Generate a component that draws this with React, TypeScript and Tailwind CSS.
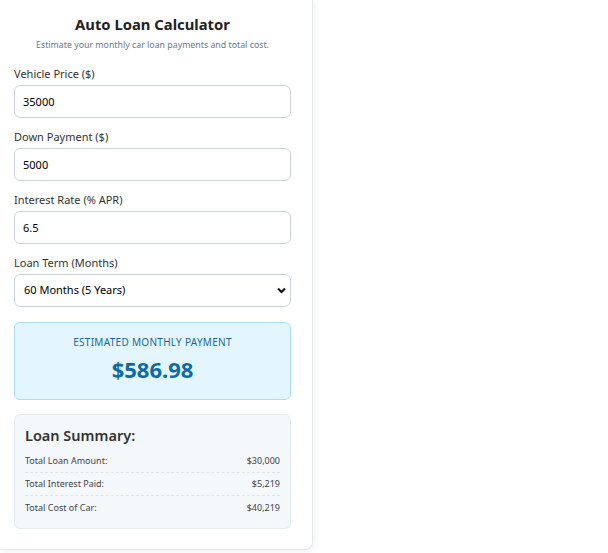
import { useState } from "react";

const fieldCls =
  "w-full h-[33px] px-[8px] border border-[#c9d3df] rounded-[6px] bg-white text-[11px] text-black focus:outline-none";

const App = () => {
  const [price, setPrice] = useState("35000");
  const [down, setDown] = useState("5000");
  const [rate, setRate] = useState("6.5");
  const [term, setTerm] = useState("60");

  const principal = Number(price) - Number(down);
  const r = Number(rate) / 100 / 12;
  const n = Number(term);
  const monthly = r === 0 ? principal / n : (principal * r) / (1 - Math.pow(1 + r, -n));
  const totalPaid = monthly * n;
  const interest = totalPaid - principal;
  const totalCost = totalPaid + Number(down);

  const fmt = (v: number) => "$" + Math.round(v).toLocaleString("en-US");

  return (
    <div className="min-h-[553px] bg-white font-['Noto_Sans',sans-serif]">
      <div className="w-[313px] pl-[14px] pr-[21px] pt-[13px] pb-[20px] bg-white border-r border-b border-[#e3e8ee] rounded-br-[8px] shadow-[2px_2px_6px_rgba(0,0,0,0.06)]">
        <h1 className="text-center text-[14.8px] font-bold text-[#222] leading-[22px]">Auto Loan Calculator</h1>
        <p className="text-center text-[8.8px] text-[#6b7a8c] mt-[3px] leading-[14px]">
          Estimate your monthly car loan payments and total cost.
        </p>

        <div className="mt-[14px] flex flex-col gap-[11px]">
          <div>
            <label className="block text-[11px] text-[#333] leading-[15px] mb-[4px]">Vehicle Price ($)</label>
            <input className={fieldCls} value={price} onChange={(e) => setPrice(e.target.value)} />
          </div>
          <div>
            <label className="block text-[11px] text-[#333] leading-[15px] mb-[4px]">Down Payment ($)</label>
            <input className={fieldCls} value={down} onChange={(e) => setDown(e.target.value)} />
          </div>
          <div>
            <label className="block text-[11px] text-[#333] leading-[15px] mb-[4px]">Interest Rate (% APR)</label>
            <input className={fieldCls} value={rate} onChange={(e) => setRate(e.target.value)} />
          </div>
          <div>
            <label className="block text-[11px] text-[#333] leading-[15px] mb-[4px]">Loan Term (Months)</label>
            <div className="relative">
              <select
                className={fieldCls + " appearance-none pl-[9px] h-[32px]"}
                value={term}
                onChange={(e) => setTerm(e.target.value)}
              >
                <option value="36">36 Months (3 Years)</option>
                <option value="48">48 Months (4 Years)</option>
                <option value="60">60 Months (5 Years)</option>
                <option value="72">72 Months (6 Years)</option>
              </select>
              <svg
                className="absolute right-[5px] top-[13px] pointer-events-none"
                width="9"
                height="7"
                viewBox="0 0 9 7"
              >
                <path d="M1 1.5 L4.5 5 L8 1.5" fill="none" stroke="#111" strokeWidth="2" />
              </svg>
            </div>
          </div>
        </div>

        <div className="mt-[15px] h-[78px] rounded-[6px] border border-[#a9def5] bg-[#e3f6fd] flex flex-col items-center pt-[12px]">
          <div className="text-[10px] tracking-[0.3px] text-[#17689e] leading-[14px]">ESTIMATED MONTHLY PAYMENT</div>
          <div className="text-[22px] font-bold text-[#0f69a5] leading-[30px] mt-[5px]">
            ${monthly.toFixed(2)}
          </div>
        </div>

        <div className="mt-[14px] rounded-[6px] border border-[#e6ebf0] bg-[#f5f8fb] px-[10px] pt-[9px] pb-[9px]">
          <h2 className="text-[14.5px] font-semibold text-[#333] leading-[22px] mb-[4px]">Loan Summary:</h2>
          <div className="flex justify-between text-[9px] text-[#444] h-[23px] items-center border-b border-dashed border-[#e0e5ea]">
            <span>Total Loan Amount:</span>
            <span>{fmt(principal)}</span>
          </div>
          <div className="flex justify-between text-[9px] text-[#444] h-[23px] items-center border-b border-dashed border-[#e0e5ea]">
            <span>Total Interest Paid:</span>
            <span>{fmt(interest)}</span>
          </div>
          <div className="flex justify-between text-[9px] text-[#444] h-[23px] items-center">
            <span>Total Cost of Car:</span>
            <span>{fmt(totalCost)}</span>
          </div>
        </div>
      </div>
    </div>
  );
};

export default App;
